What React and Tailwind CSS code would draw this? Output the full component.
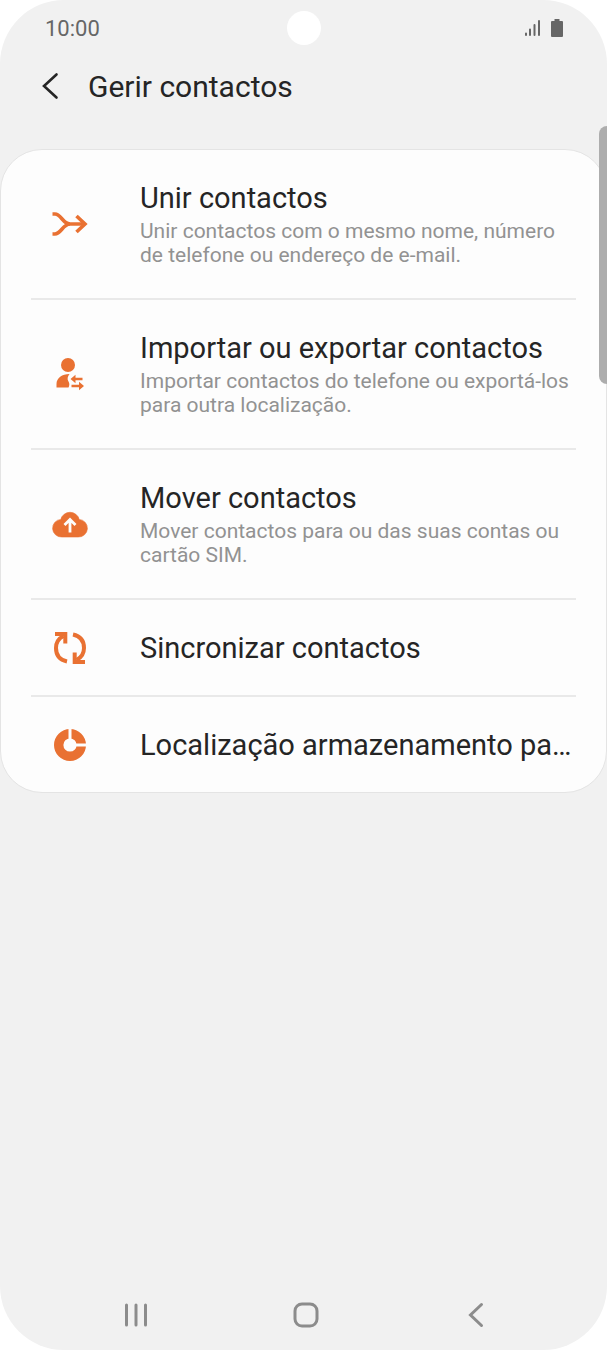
import React from "react";

const MergeIcon = () => (
  <svg viewBox="0 0 36 32" className="w-9 h-8" fill="none" stroke="currentColor" strokeWidth="3.600" aria-hidden="true">
    <path d="M.5 6h2.500C9 6 11 16 18 16h15" />
    <path d="M.5 26h2.500C9 26 11 16 18 16" />
    <path d="M24.500 8l8.500 8-8.500 8" />
  </svg>
);

const ImportExportIcon = () => (
  <svg viewBox="0 0 36 36" className="size-9" fill="currentColor" aria-hidden="true">
    <circle cx="16" cy="9" r="7" />
    <path d="M4.500 31.500v-3.500C4.500 22 10 18 17.500 18c-2 2.500-2.500 5-1 7.500 1.200 2 1 4 0 6z" />
    <path d="M18.500 23l5-4.200v3h7v2.400h-7v3z" />
    <path d="M32 30l-5-4.200v3h-7.500v2.400H27v3z" />
  </svg>
);

const CloudIcon = () => (
  <svg viewBox="0 0 36 32" className="w-9 h-8" aria-hidden="true">
    <path
      d="M10 29a8.800 8.800 0 0 1-1.200-17.600 9.500 9.500 0 0 1 18.400 0A8.800 8.800 0 0 1 26 29z"
      fill="currentColor"
      stroke="currentColor"
      strokeWidth="0.600"
    />
    <path d="M18 24.500V12M12.500 17l5.500-5.500 5.500 5.500" fill="none" stroke="#fdfdfd" strokeWidth="2.800" />
  </svg>
);

const SyncIcon = () => (
  <svg viewBox="0 0 36 36" className="size-9" fill="none" stroke="currentColor" strokeWidth="4" aria-hidden="true">
    <path d="M15 31.500C8 30 4 25 4 18c0-5 2.500-9.500 7.500-12" />
    <path d="M3 4h10.300v9.500" />
    <path d="M21 4.500c7 1.500 11 6.500 11 13.500 0 5-2.500 9.500-7.500 12" />
    <path d="M33 32H22.700v-9.500" />
  </svg>
);

const StorageIcon = () => (
  <svg viewBox="0 0 36 36" className="size-9" aria-hidden="true">
    <circle cx="18" cy="18" r="11.300" fill="none" stroke="currentColor" strokeWidth="9.400" />
    <path d="M18 18V1M18 18h17" fill="none" stroke="#fdfdfd" strokeWidth="3" />
  </svg>
);

const options = [
  {
    title: "Unir contactos",
    text: "Unir contactos com o mesmo nome, número de telefone ou endereço de e-mail.",
    icon: MergeIcon,
  },
  {
    title: "Importar ou exportar contactos",
    text: "Importar contactos do telefone ou exportá-los para outra localização.",
    icon: ImportExportIcon,
  },
  {
    title: "Mover contactos",
    text: "Mover contactos para ou das suas contas ou cartão SIM.",
    icon: CloudIcon,
  },
  { title: "Sincronizar contactos", icon: SyncIcon },
  { title: "Localização armazenamento pa…", icon: StorageIcon },
];

function StatusBar() {
  return (
    <div className="grid grid-cols-3 items-center h-14 pl-[45px] pr-11 text-[#666]">
      <span className="text-[22px]">10:00</span>
      <span className="justify-self-center size-[34px] rounded-full bg-white" />
      <div className="flex items-center justify-end gap-[10px]">
        <svg viewBox="0 0 16 18" className="w-4 h-[18px]" stroke="currentColor" strokeWidth="2" strokeLinecap="round" aria-hidden="true">
          <path d="M1 14.500V16M5 10.500V16M9.500 6V16M14 2V16" />
        </svg>
        <svg viewBox="0 0 12 18" className="w-3 h-[18px]" fill="currentColor" aria-hidden="true">
          <path d="M3.500 0h5v2H11a1 1 0 0 1 1 1v14a1 1 0 0 1-1 1H1a1 1 0 0 1-1-1V3a1 1 0 0 1 1-1h2.500z" />
        </svg>
      </div>
    </div>
  );
}

function Header() {
  return (
    <header className="flex items-center gap-5 h-[62px] pl-9 mb-[31px]">
      <button type="button" aria-label="Voltar">
        <svg viewBox="0 0 32 32" className="size-8" fill="none" stroke="currentColor" strokeWidth="2.600" strokeLinecap="round" aria-hidden="true">
          <path d="M20.500 3.500L8 15l12.500 11.500" />
        </svg>
      </button>
      <h1 className="text-3xl">Gerir contactos</h1>
    </header>
  );
}

function Option({ title, text, icon: Icon }) {
  return (
    <li className="border-b-2 border-[#e9e9e9] last:border-b-0">
      <button
        type="button"
        className={`flex items-center w-full pt-[30px] text-left ${text ? "pb-[31px]" : "pb-[29px]"}`}
      >
        <span className="flex justify-center shrink-0 w-[78px] mr-[31px] text-[#e97132]">
          <Icon />
        </span>
        <span className="flex-1 min-w-0">
          <span className="block truncate text-[29px] leading-9">{title}</span>
          {text && <span className="block mt-[3px] text-[21px] leading-6 text-[#929292]">{text}</span>}
        </span>
      </button>
    </li>
  );
}

function NavBar() {
  return (
    <nav className="flex justify-around items-center h-[70px] pl-[51px] pr-[46px] text-[#8c8c8c]">
      <button type="button" aria-label="Recentes">
        <svg viewBox="0 0 28 28" className="size-7" stroke="currentColor" strokeWidth="3" strokeLinecap="round" aria-hidden="true">
          <path d="M4.500 4v20M14 4v20M23.500 4v20" />
        </svg>
      </button>
      <button type="button" aria-label="Início">
        <svg viewBox="0 0 28 28" className="size-7" fill="none" stroke="currentColor" strokeWidth="3" aria-hidden="true">
          <rect x="3" y="3" width="22" height="22" rx="7" />
        </svg>
      </button>
      <button type="button" aria-label="Retroceder">
        <svg viewBox="0 0 28 28" className="size-7" fill="none" stroke="currentColor" strokeWidth="3" strokeLinecap="round" aria-hidden="true">
          <path d="M19.500 3.500L8.500 14l11 10.500" />
        </svg>
      </button>
    </nav>
  );
}

export default function App() {
  return (
    <div className="relative flex flex-col min-h-screen overflow-hidden rounded-[64px] bg-[#f1f1f1] font-['Roboto',sans-serif] text-[#252525]">
      <StatusBar />
      <Header />
      <main className="grow">
        <ul className="px-[30px] border border-[#e4e4e4] rounded-[42px] bg-[#fdfdfd]">
          {options.map((option) => (
            <Option key={option.title} {...option} />
          ))}
        </ul>
      </main>
      <NavBar />
      {/* scroll indicator */}
      <div className="absolute top-[126px] right-0 w-2 h-[258px] rounded-l-lg bg-[#adadad]" />
    </div>
  );
}
